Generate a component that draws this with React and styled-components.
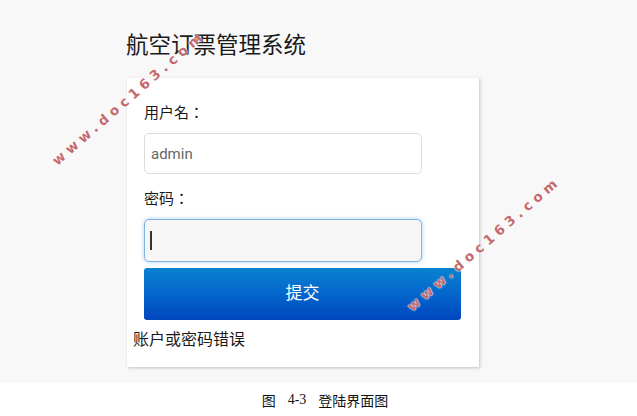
import React from "react"
import styled, { createGlobalStyle } from "styled-components"

const GlobalStyle = createGlobalStyle`
  html, body {
    margin: 0;
    padding: 0;
    background: #ffffff;
  }
  body {
    font-family: "Noto Sans CJK SC", "Liberation Sans", sans-serif;
    color: #222;
  }
`

const App = () => {
  return (
    <Page>
      <GlobalStyle />
      <Screen>
        <Title>航空订票管理系统</Title>
        <Card>
          <Fields>
            <Label>用户名：</Label>
            <Input type="text" defaultValue="admin" readOnly />
            <Label>密码：</Label>
            <Input type="password" focused readOnly />
            <Submit type="button">提交</Submit>
          </Fields>
          <ErrorText>账户或密码错误</ErrorText>
        </Card>
      </Screen>
      <Caption>
        图<Gap />4-3<Gap />登陆界面图
      </Caption>
      <Watermark style={{ left: 30, top: 90 }}>www.doc163.com</Watermark>
      <Watermark style={{ left: 385, top: 236 }}>www.doc163.com</Watermark>
    </Page>
  )
}

export default App

const Page = styled.div`
  position: relative;
  width: 637px;
  height: 416px;
  overflow: hidden;
`

const Screen = styled.div`
  height: 383px;
  box-sizing: border-box;
  background: #f8f8f8;
  padding: 28px 0 0 126px;
`

const Title = styled.h1`
  margin: 0 0 20px;
  font-size: 22.5px;
  line-height: 30px;
  font-weight: 400;
  color: #1a1a1a;
`

const Card = styled.div`
  width: 352px;
  height: 289px;
  box-sizing: border-box;
  margin-left: 1px;
  background: #ffffff;
  padding: 23px 0 0 6px;
  box-shadow: 1px 1px 3px rgba(0, 0, 0, 0.22);
`

const Fields = styled.div`
  display: flex;
  flex-direction: column;
  align-items: flex-start;
  padding-left: 11px;
`

const Label = styled.div`
  font-family: "Noto Sans CJK TC", "Noto Sans CJK SC", sans-serif;
  font-size: 15px;
  line-height: 22px;
  margin-bottom: 10px;
  color: #1a1a1a;
`

const Input = styled.input`
  width: 278px;
  height: ${(p) => (p.focused ? "43px" : "41px")};
  box-sizing: border-box;
  margin: 0 0 ${(p) => (p.focused ? "6px" : "13px")};
  padding: 0 6px;
  font-family: "Roboto", "Liberation Sans", sans-serif;
  font-size: 15px;
  color: #666;
  border-radius: 5px;
  outline: none;
  border: 1px solid ${(p) => (p.focused ? "#82b3e3" : "#dcdcdc")};
  background: ${(p) => (p.focused ? "#f6f6f6" : "#ffffff")};
  box-shadow: ${(p) => (p.focused ? "0 0 4px rgba(102, 170, 233, 0.55)" : "none")};
  caret-color: #222;
  ${(p) =>
    p.focused &&
    `
    background-image: linear-gradient(#333, #333);
    background-repeat: no-repeat;
    background-size: 2px 19px;
    background-position: 5px center;
  `}
`

const Submit = styled.button`
  width: 317px;
  height: 52px;
  border: none;
  border-radius: 3px;
  background: linear-gradient(to bottom, #0a82d0 0%, #0466cc 50%, #0046bf 100%);
  color: #ffffff;
  font-family: "Noto Sans CJK SC", sans-serif;
  font-size: 17px;
  padding: 0 0 5px;
  cursor: pointer;
`

const ErrorText = styled.div`
  margin-top: 7px;
  font-size: 16px;
  line-height: 22px;
  color: #1a1a1a;
`

const Caption = styled.div`
  height: 33px;
  display: flex;
  align-items: center;
  justify-content: center;
  padding-left: 13px;
  box-sizing: border-box;
  font-family: "Liberation Serif", "Noto Sans CJK SC", serif;
  font-size: 14px;
  color: #111;
`

const Gap = styled.span`
  display: inline-block;
  width: 12px;
`

const Watermark = styled.div`
  position: absolute;
  width: 196px;
  text-align: center;
  transform: rotate(-41deg);
  font-family: "DejaVu Sans", sans-serif;
  font-weight: 700;
  font-size: 13.5px;
  letter-spacing: 4.6px;
  color: #c46a6e;
  text-shadow: 0 0 2px #ffffff, 0 0 1px #ffffff;
  pointer-events: none;
`
